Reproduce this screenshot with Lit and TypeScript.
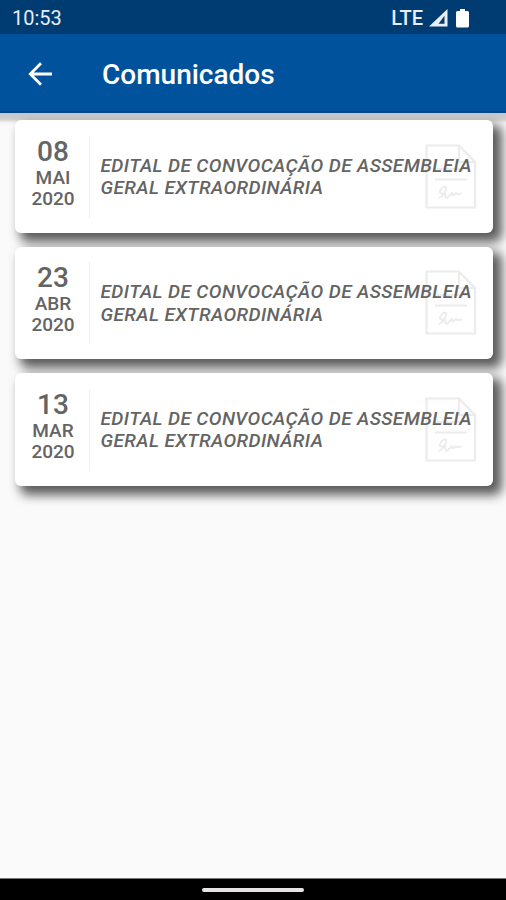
import { LitElement, html, css, svg } from "lit";
import { customElement, property } from "lit/decorators.js";

interface Notice { day: string; month: string; year: string; title: string[]; }

const TITLE = ["EDITAL DE CONVOCAÇÃO DE ASSEMBLEIA", "GERAL EXTRAORDINÁRIA"];
const NOTICES: Notice[] = [
  { day: "08", month: "MAI", year: "2020", title: TITLE },
  { day: "23", month: "ABR", year: "2020", title: TITLE },
  { day: "13", month: "MAR", year: "2020", title: TITLE },
];

@customElement("notice-card")
class NoticeCard extends LitElement {
  @property({ attribute: false }) notice!: Notice;

  static styles = css`
    :host { display: block; }
    .card {
      position: relative; box-sizing: border-box; height: 112.5px; display: flex;
      align-items: flex-start; padding-top: 15.6px; background: #fff; border-radius: 6px;
      box-shadow: 7px 7px 11px 2px rgba(0, 0, 0, 0.64);
      color: #646464; font-weight: 500;
    }
    .date {
      box-sizing: border-box; width: 75px; height: 82px; border-right: 1px solid #f0f0f0;
      text-align: center; font-size: 19px; line-height: 21px; padding-left: 2px;
    }
    .day { font-size: 28px; line-height: 31px; }
    .title {
      position: relative; margin: 19px 0 0 10.5px; font-size: 19px; line-height: 22.4px;
      font-style: italic; white-space: nowrap; letter-spacing: 0.41px;
    }
    .doc { position: absolute; left: 410px; top: 23.5px; width: 52px; height: 65px; }
  `;

  render() {
    const n = this.notice;
    return html`<article class="card">
      <svg class="doc" viewBox="0 0 52 65" fill="none" stroke="#ececec" stroke-width="2.2">
        ${svg`<path d="M1.5 1.5H34L50 18V63.5H1.5Z"/><path d="M34 1.5V18H50"/>
        <path d="M10 25H42M10 35.5H42"/>
        <path stroke-width="1.8" stroke-linecap="round" stroke-linejoin="round" d="M14 54C17 53 22 47 21 43C19 41 14 46 15 49C17 50 19 49 20 49C20 53 21 55 23 53L27 49C27 52 28 52 31 49C32 51 33 50 36 49.5"/>`}
      </svg>
      <div class="date"><div class="day">${n.day}</div><div>${n.month}</div><div>${n.year}</div></div>
      <div class="title">${n.title.map((line) => html`<div>${line}</div>`)}</div>
    </article>`;
  }
}

@customElement("app-root")
class AppRoot extends LitElement {
  static styles = css`
    :host {
      display: flex; flex-direction: column; width: 506px; height: 900px; overflow: hidden;
      background: #fafafa; font-family: Roboto, "Liberation Sans", sans-serif;
    }
    .status {
      height: 34px; flex: none; background: #003c71; color: #e9edf5; display: flex;
      align-items: center; box-sizing: border-box; padding: 2px 37px 0 12px;
      font-size: 20px;
    }
    .clock { flex: 1; }
    .lte { font-weight: 500; }
    .signal { width: 19px; height: 18px; margin-left: 6px; }
    .battery { width: 13px; height: 19px; margin-left: 8px; }
    .bar {
      position: relative; z-index: 1; height: 79px; flex: none; background: #00529c; color: #fff;
      display: flex; align-items: center; box-sizing: border-box; padding-left: 28px;
      border-bottom: 2px solid #00468f;
    }
    .back { width: 24px; height: 24px; margin-top: 2px; }
    .heading { margin: 3.5px 0 0 50px; font-size: 28px; font-weight: 500; }
    .list {
      flex: 1; display: flex; flex-direction: column; gap: 14px; padding: 7.3px 13px 0 15px;
      background: linear-gradient(#c5c7ca 0, #cfcfd0 6px, #f6f6f6 10px, #fafafa 14px);
    }
    .nav {
      height: 22px; flex: none; box-sizing: border-box; background: #000; border-top: 1px solid #777;
      display: flex; justify-content: center; padding-top: 9.4px;
    }
    .handle { width: 102px; height: 4px; border-radius: 2px; background: #e8e4e6; }
  `;

  render() {
    return html`
      <div class="status">
        <span class="clock">10:53</span><span class="lte">LTE</span>
        <svg class="signal" viewBox="0 0 19 18"><path fill="#e9edf5" fill-rule="evenodd" d="M0 17.5L18.5 0V17.5ZM9.5 14.8H15.5V6.8Z"/></svg>
        <svg class="battery" viewBox="0 0 13 19"><path fill="#fff" d="M4 0H9V2H11.5Q13 2 13 3.5V17Q13 18.5 11.5 18.5H1.5Q0 18.5 0 17V3.5Q0 2 1.5 2H4Z"/></svg>
      </div>
      <header class="bar">
        <svg class="back" viewBox="0 0 24 24" fill="none" stroke="#fff" stroke-width="2.8"><path d="M24 12H2.5M13 1.3L2.3 12L13 22.7"/></svg>
        <div class="heading">Comunicados</div>
      </header>
      <main class="list">${NOTICES.map((n) => html`<notice-card .notice=${n}></notice-card>`)}</main>
      <footer class="nav"><div class="handle"></div></footer>`;
  }
}
